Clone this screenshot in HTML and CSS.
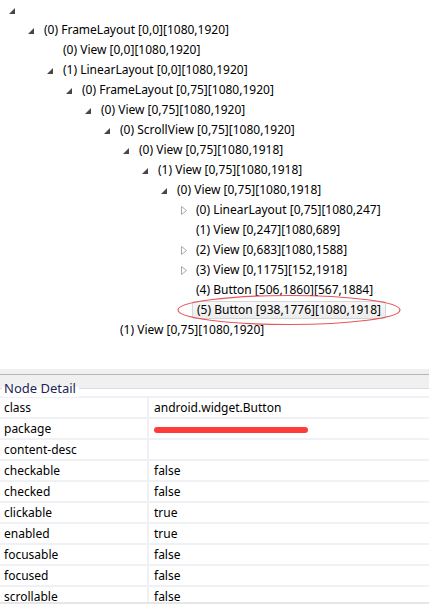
FILE: index.html
```html
<!DOCTYPE html>
<html>
<head>
<meta charset="utf-8">
<link rel="stylesheet" href="styles.css">
</head>
<body>
<div class="tree">
  <div class="row l0"><span class="tg"><svg class="exp" width="6" height="6" viewBox="0 0 6 6"><polygon points="0,6 6,6 6,0"/></svg></span><span class="lbl"></span></div>
  <div class="row l1"><span class="tg"><svg class="exp" width="6" height="6" viewBox="0 0 6 6"><polygon points="0,6 6,6 6,0"/></svg></span><span class="lbl">(0) FrameLayout [0,0][1080,1920]</span></div>
  <div class="row l2"><span class="tg"></span><span class="lbl">(0) View [0,0][1080,1920]</span></div>
  <div class="row l2"><span class="tg"><svg class="exp" width="6" height="6" viewBox="0 0 6 6"><polygon points="0,6 6,6 6,0"/></svg></span><span class="lbl">(1) LinearLayout [0,0][1080,1920]</span></div>
  <div class="row l3"><span class="tg"><svg class="exp" width="6" height="6" viewBox="0 0 6 6"><polygon points="0,6 6,6 6,0"/></svg></span><span class="lbl">(0) FrameLayout [0,75][1080,1920]</span></div>
  <div class="row l4"><span class="tg"><svg class="exp" width="6" height="6" viewBox="0 0 6 6"><polygon points="0,6 6,6 6,0"/></svg></span><span class="lbl">(0) View [0,75][1080,1920]</span></div>
  <div class="row l5"><span class="tg"><svg class="exp" width="6" height="6" viewBox="0 0 6 6"><polygon points="0,6 6,6 6,0"/></svg></span><span class="lbl">(0) ScrollView [0,75][1080,1920]</span></div>
  <div class="row l6"><span class="tg"><svg class="exp" width="6" height="6" viewBox="0 0 6 6"><polygon points="0,6 6,6 6,0"/></svg></span><span class="lbl">(0) View [0,75][1080,1918]</span></div>
  <div class="row l7"><span class="tg"><svg class="exp" width="6" height="6" viewBox="0 0 6 6"><polygon points="0,6 6,6 6,0"/></svg></span><span class="lbl">(1) View [0,75][1080,1918]</span></div>
  <div class="row l8"><span class="tg"><svg class="exp" width="6" height="6" viewBox="0 0 6 6"><polygon points="0,6 6,6 6,0"/></svg></span><span class="lbl">(0) View [0,75][1080,1918]</span></div>
  <div class="row l9"><span class="tg"><svg class="col" width="6" height="9" viewBox="0 0 6 9"><polygon points="0.5,0.5 5.5,4.5 0.5,8.5"/></svg></span><span class="lbl">(0) LinearLayout [0,75][1080,247]</span></div>
  <div class="row l9"><span class="tg"></span><span class="lbl">(1) View [0,247][1080,689]</span></div>
  <div class="row l9"><span class="tg"><svg class="col" width="6" height="9" viewBox="0 0 6 9"><polygon points="0.5,0.5 5.5,4.5 0.5,8.5"/></svg></span><span class="lbl">(2) View [0,683][1080,1588]</span></div>
  <div class="row l9"><span class="tg"><svg class="col" width="6" height="9" viewBox="0 0 6 9"><polygon points="0.5,0.5 5.5,4.5 0.5,8.5"/></svg></span><span class="lbl">(3) View [0,1175][152,1918]</span></div>
  <div class="row l9"><span class="tg"></span><span class="lbl">(4) Button [506,1860][567,1884]</span></div>
  <div class="row l9 sel"><span class="tg"></span><span class="lbl">(5) Button [938,1776][1080,1918]</span>
    <svg class="ring" width="226" height="32" viewBox="0 0 226 32"><ellipse cx="113" cy="16" rx="111" ry="14.5"/></svg>
  </div>
  <div class="row l5"><span class="tg"></span><span class="lbl">(1) View [0,75][1080,1920]</span></div>
</div>
<div class="detail">
  <div class="band"></div>
  <div class="legend"><span class="legend-text">Node Detail</span></div>
  <div class="props">
    <div class="prow"><div class="k">class</div><div class="v">android.widget.Button</div></div>
    <div class="prow"><div class="k">package</div><div class="v"><span class="redact"></span></div></div>
    <div class="prow"><div class="k">content-desc</div><div class="v"></div></div>
    <div class="prow"><div class="k">checkable</div><div class="v">false</div></div>
    <div class="prow"><div class="k">checked</div><div class="v">false</div></div>
    <div class="prow"><div class="k">clickable</div><div class="v">true</div></div>
    <div class="prow"><div class="k">enabled</div><div class="v">true</div></div>
    <div class="prow"><div class="k">focusable</div><div class="v">false</div></div>
    <div class="prow"><div class="k">focused</div><div class="v">false</div></div>
    <div class="prow"><div class="k">scrollable</div><div class="v">false</div></div>
  </div>
</div>
</body>
</html>
```
FILE: styles.css
```css
html, body {
  margin: 0;
  padding: 0;
  background: #fff;
}
body {
  width: 429px;
  height: 604px;
  overflow: hidden;
  font-family: "Noto Sans", "Open Sans", sans-serif;
  font-size: 12px;
  color: #000;
}
.tree {
  height: 369px;
}
.row {
  position: relative;
  height: 20px;
  display: flex;
  align-items: center;
  white-space: nowrap;
}
.tg {
  width: 19px;
  height: 20px;
  display: flex;
  align-items: center;
  padding-left: 3px;
  box-sizing: border-box;
}
.exp { fill: #474747; margin-top: 2px; }
.col { fill: #fff; stroke: #a8a8a8; stroke-width: 1; margin-left: 1px; }
.l0 { padding-left: 6px; }
.l1 { padding-left: 25px; }
.l2 { padding-left: 44px; }
.l3 { padding-left: 63px; }
.l4 { padding-left: 82px; }
.l5 { padding-left: 101px; }
.l6 { padding-left: 120px; }
.l7 { padding-left: 139px; }
.l8 { padding-left: 158px; }
.l9 { padding-left: 177px; }
.lbl {
  line-height: 18px;
  padding: 0 3px 0 0;
}
.sel .lbl {
  margin-left: -4px;
  padding: 0 4px;
  background: linear-gradient(#f7f7f7, #ececec);
  border: 1px solid #d6d6d6;
  border-radius: 2px;
  line-height: 16px;
}
.ring {
  position: absolute;
  left: 176px;
  top: -6px;
  fill: none;
  stroke: #e8565a;
  stroke-width: 1.2;
}
.detail {
  height: 235px;
  display: flex;
  flex-direction: column;
}
.band {
  height: 5px;
  background: #f0f0f0;
  border-bottom: 1px solid #b4b4b4;
}
.legend {
  height: 21px;
  position: relative;
  background: linear-gradient(#f0f0f0 0, #f0f0f0 13px, #d7dde2 13px, #d7dde2 14px, #fff 14px);
  display: flex;
  align-items: center;
}
.legend-text {
  color: #1a2558;
  font-size: 13px;
  padding: 0 3px 0 2px;
  margin-left: 2px;
  margin-top: 5px;
  background: linear-gradient(#f0f0f0 0, #f0f0f0 8px, #fff 8px);
}
.props {
  flex: 1;
  overflow: hidden;
  border-bottom: 2px solid #e6e6e6;
  border-top: 2px solid #eff1f4;
}
.prow {
  display: flex;
  height: 19px;
  border-bottom: 2px solid #eff1f4;
  align-items: center;
}
.k {
  width: 143px;
  padding-left: 4px;
  height: 19px;
  line-height: 19px;
  border-right: 2px solid #eff1f4;
}
.v {
  padding-left: 5px;
  line-height: 19px;
  display: flex;
  align-items: center;
  height: 19px;
}
.redact {
  background: #ff3c3c;
  border-radius: 3px;
  display: block;
  width: 154px;
  height: 6px;
  margin-top: 2px;
}
```
